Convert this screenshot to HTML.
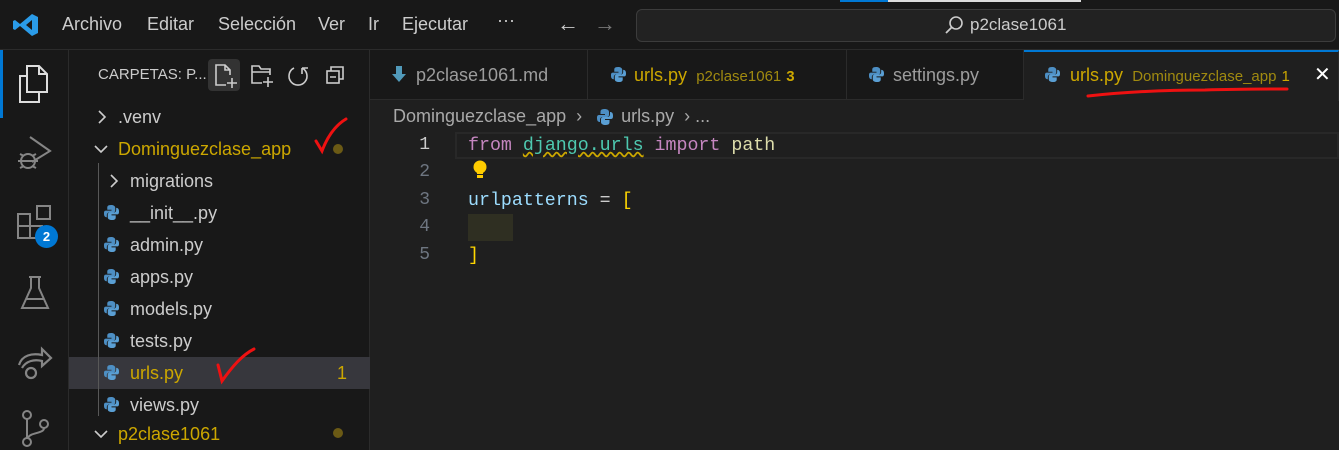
<!DOCTYPE html>
<html><head><meta charset="utf-8"><style>
*{margin:0;padding:0;box-sizing:border-box}
body{width:1339px;height:450px;background:#1f1f1f;font-family:"Liberation Sans",sans-serif;overflow:hidden;position:relative;color:#ccc}
.a{position:absolute}
.title{left:0;top:0;width:1339px;height:50px;background:#181818;border-bottom:1px solid #2b2b2b}
.menu{top:14px;font-size:18px;color:#ccc}
.act{left:0;top:50px;width:69px;height:400px;background:#181818;border-right:1px solid #2b2b2b}
.side{left:69px;top:50px;width:301px;height:400px;background:#181818;border-right:1px solid #2b2b2b}
.tabs{left:370px;top:50px;width:969px;height:50px;background:#181818;border-bottom:1px solid #2b2b2b}
.tab{top:50px;height:50px;border-right:1px solid #2b2b2b;font-size:18px;line-height:50px;color:#9d9d9d;padding-left:46px;white-space:nowrap}
.row{left:69px;width:301px;height:32px;font-size:18px;line-height:32px;color:#ccc;white-space:nowrap}
.code{font-family:"Liberation Mono",monospace;font-size:18.3px;white-space:pre}
.ln{left:400px;width:30px;text-align:right;font-family:"Liberation Mono",monospace;font-size:18px;color:#6e7681}
.chev{position:absolute;fill:none;stroke:#ccc;stroke-width:1.6}
</style></head><body>
<svg width="0" height="0" style="position:absolute"><defs><symbol id="py" viewBox="0 0 16 16"><path d="M7.5 0C3.5 0 3.5 2 3.5 3V5H8V6H2C0 6 0 8 0 9C0 12 1 13 3 13V11C3 9 4 8 6 8H10C11 8 12 7 12 6V3C12 1 10 0 7.5 0Z" fill="#4d8fc4"/><path d="M8.5 16C12.5 16 12.5 14 12.5 13V11H8V10H14C16 10 16 8 16 7C16 4 15 3 13 3V5C13 7 12 8 10 8H6C5 8 4 9 4 10V13C4 15 6 16 8.5 16Z" fill="#5a9fd4"/></symbol></defs></svg>
<div class="a title"></div>
<div class="a" style="left:840px;top:0;width:48px;height:2px;background:#0078d4"></div>
<div class="a" style="left:888px;top:0;width:193px;height:2px;background:#ddd"></div>
<svg class="a" style="left:13px;top:13px" width="26" height="24" viewBox="0 0 26 24"><path d="M19 1L25 4V20L19 23L7 13L2 17L0 16V8L2 7L7 11L19 1ZM19 7L13 12L19 17Z" fill="#2a9be8"/></svg>
<div class="a menu" style="left:62px">Archivo</div>
<div class="a menu" style="left:147px">Editar</div>
<div class="a menu" style="left:218px">Selección</div>
<div class="a menu" style="left:318px">Ver</div>
<div class="a menu" style="left:368px">Ir</div>
<div class="a menu" style="left:402px">Ejecutar</div>
<div class="a menu" style="left:497px;top:10px">···</div>
<div class="a menu" style="left:557px;top:11px;font-size:22px">←</div>
<div class="a menu" style="left:594px;top:11px;font-size:22px;color:#777">→</div>
<div class="a" style="left:636px;top:9px;width:700px;height:33px;border:1px solid #3c3c3c;border-radius:6px;background:#222"></div>
<svg class="a" style="left:944px;top:15px" width="20" height="20"><circle cx="12" cy="8" r="6" stroke="#ccc" stroke-width="1.6" fill="none"/><path d="M8 12L2 18" stroke="#ccc" stroke-width="1.8"/></svg>
<div class="a menu" style="left:970px;top:15px;font-size:17px">p2clase1061</div>

<div class="a act"></div>
<div class="a" style="left:0;top:50px;width:3px;height:68px;background:#0078d4"></div>
<svg class="a" style="left:17px;top:64px" width="34" height="40" fill="none" stroke="#ddd" stroke-width="2"><path d="M10 2H22L30 10V28H10Z"/><path d="M22 2V10H30"/><path d="M10 12H3V38H22V28"/></svg>
<svg class="a" style="left:16px;top:134px" width="38" height="40" fill="none" stroke="#858585" stroke-width="2"><path d="M14 3L34 17L16 28"/><circle cx="12" cy="27" r="7"/><path d="M2 27H22M4 20L8 22M4 34L8 32M20 20L16 22M20 34L16 32"/></svg>
<svg class="a" style="left:17px;top:204px" width="36" height="40" fill="none" stroke="#858585" stroke-width="2"><rect x="1" y="10" width="12" height="12"/><rect x="1" y="22" width="12" height="12"/><rect x="13" y="22" width="12" height="12"/><rect x="20" y="2" width="13" height="13"/></svg>
<div class="a" style="left:35px;top:225px;width:23px;height:23px;border-radius:50%;background:#0078d4;color:#fff;font-size:13px;font-weight:bold;text-align:center;line-height:23px">2</div>
<svg class="a" style="left:20px;top:275px" width="30" height="36" fill="none" stroke="#858585" stroke-width="2"><path d="M9 2H21M11 2V13L2 33H28L19 13V2M6 24H24"/></svg>
<svg class="a" style="left:16px;top:343px" width="38" height="40" fill="none" stroke="#858585" stroke-width="2.2"><path d="M3 22C6 12 16 10 26 12V6L35 15L26 23V18C18 16 10 18 6 25"/><circle cx="15" cy="30" r="5"/></svg>
<svg class="a" style="left:20px;top:410px" width="30" height="40" fill="none" stroke="#858585" stroke-width="2"><circle cx="7" cy="5" r="4"/><circle cx="24" cy="14" r="4"/><circle cx="7" cy="32" r="4"/><path d="M7 9V28M24 18C24 24 10 22 8 28"/></svg>

<div class="a side"></div>
<div class="a" style="left:98px;top:66px;font-size:15px;color:#ccc">CARPETAS: P...</div>
<div class="a" style="left:208px;top:59px;width:32px;height:32px;background:#333;border-radius:4px"></div>
<svg class="a" style="left:214px;top:63px" width="24" height="26" fill="none" stroke="#ccc" stroke-width="1.6"><path d="M12 22H2V2H11L16 7V12M11 2V7H16M18 15V25M13 20H23"/></svg>
<svg class="a" style="left:250px;top:63px" width="26" height="26" fill="none" stroke="#ccc" stroke-width="1.6"><path d="M12 20H2V3H9L11 6H20V12M2 9H20M18 14V24M13 19H23"/></svg>
<svg class="a" style="left:287px;top:64px" width="22" height="24" fill="none" stroke="#ccc" stroke-width="1.6"><path d="M7 4A9 9 0 1 0 15 4M15 4V10M15 4H21"/></svg>
<svg class="a" style="left:325px;top:64px" width="22" height="22" fill="none" stroke="#ccc" stroke-width="1.6"><rect x="2" y="7" width="12" height="12"/><path d="M6 7V3H18V15H14M5 13H11"/></svg>

<div class="a row" style="top:357px;background:#37373d"></div>
<svg class="chev" style="left:96px;top:110px" width="12" height="14"><path d="M3 1L9 7L3 13"/></svg>
<div class="a row" style="top:101px;padding-left:49px">.venv</div>
<svg class="chev" style="left:94px;top:144px" width="14" height="10"><path d="M1 2L7 8L13 2"/></svg>
<div class="a row" style="top:133px;padding-left:49px;color:#cca700">Dominguezclase_app</div>
<div class="a" style="left:333px;top:144px;width:10px;height:10px;border-radius:50%;background:#6b5a15"></div>
<div class="a" style="left:98px;top:163px;width:1px;height:253px;background:#585858"></div>
<svg class="chev" style="left:108px;top:174px" width="12" height="14"><path d="M3 1L9 7L3 13"/></svg>
<div class="a row" style="top:165px;padding-left:61px">migrations</div>
<div class="a row" style="top:197px;padding-left:61px">__init__.py</div>
<div class="a row" style="top:229px;padding-left:61px">admin.py</div>
<div class="a row" style="top:261px;padding-left:61px">apps.py</div>
<div class="a row" style="top:293px;padding-left:61px">models.py</div>
<div class="a row" style="top:325px;padding-left:61px">tests.py</div>
<div class="a row" style="top:357px;padding-left:61px;color:#cca700">urls.py<span style="position:absolute;left:268px">1</span></div>
<div class="a row" style="top:389px;padding-left:61px">views.py</div>
<svg class="chev" style="left:94px;top:429px" width="14" height="10"><path d="M1 2L7 8L13 2"/></svg>
<div class="a row" style="top:418px;padding-left:49px;color:#cca700">p2clase1061</div>
<div class="a" style="left:333px;top:428px;width:10px;height:10px;border-radius:50%;background:#6b5a15"></div>
<svg class="a" style="left:104px;top:205px" width="15" height="15"><use href="#py"/></svg>
<svg class="a" style="left:104px;top:237px" width="15" height="15"><use href="#py"/></svg>
<svg class="a" style="left:104px;top:269px" width="15" height="15"><use href="#py"/></svg>
<svg class="a" style="left:104px;top:301px" width="15" height="15"><use href="#py"/></svg>
<svg class="a" style="left:104px;top:333px" width="15" height="15"><use href="#py"/></svg>
<svg class="a" style="left:104px;top:365px" width="15" height="15"><use href="#py"/></svg>
<svg class="a" style="left:104px;top:397px" width="15" height="15"><use href="#py"/></svg>
<svg class="a" style="left:310px;top:115px" width="40" height="40" fill="none" stroke="#e11" stroke-width="3" stroke-linecap="round"><path d="M6 26L12 36C18 20 26 10 36 4"/></svg>
<svg class="a" style="left:212px;top:345px" width="46" height="40" fill="none" stroke="#e11" stroke-width="3" stroke-linecap="round"><path d="M6 20L10 36C20 22 30 10 42 4"/></svg>

<div class="a tabs"></div>
<div class="a tab" style="left:370px;width:218px">p2clase1061.md</div>
<svg class="a" style="left:392px;top:66px" width="14" height="16"><path d="M4 0H10V8H14L7 16L0 8H4Z" fill="#519aba"/></svg>
<div class="a tab" style="left:588px;width:259px;color:#cca700">urls.py <span style="font-size:15px;color:#a08a10">&nbsp;p2clase1061</span> <b style="font-size:15px">3</b></div>
<svg class="a" style="left:611px;top:67px" width="15" height="15"><use href="#py"/></svg>
<div class="a tab" style="left:847px;width:177px">settings.py</div>
<svg class="a" style="left:869px;top:67px" width="15" height="15"><use href="#py"/></svg>
<div class="a tab" style="left:1024px;width:315px;background:#1f1f1f;border-top:2px solid #0078d4;line-height:46px;color:#cca700;height:51px">urls.py <span style="font-size:15px;color:#a08a10">&nbsp;Dominguezclase_app</span> <span style="font-size:15px">1</span> <span style="color:#fff;position:absolute;left:290px;font-size:20px">✕</span></div>
<svg class="a" style="left:1045px;top:67px" width="15" height="15"><use href="#py"/></svg>
<svg class="a" style="left:1085px;top:86px" width="206" height="14" fill="none" stroke="#e11" stroke-width="3" stroke-linecap="round"><path d="M3 10C40 6 80 4 120 4C150 3 180 3 202 3"/></svg>

<div class="a" style="left:393px;top:106px;font-size:18px;color:#a9a9a9;white-space:nowrap">Dominguezclase_app &nbsp;›&nbsp;&nbsp; <span style="display:inline-block;width:24px"></span>urls.py &nbsp;›&nbsp;...</div>
<svg class="a" style="left:597px;top:109px" width="16" height="16"><use href="#py"/></svg>
<div class="a" style="left:455px;top:132px;width:884px;height:27px;border:2px solid #282828"></div>
<div class="a ln" style="top:135px;color:#ccc">1</div>
<div class="a ln" style="top:162px">2</div>
<div class="a ln" style="top:190px">3</div>
<div class="a ln" style="top:217px">4</div>
<div class="a ln" style="top:245px">5</div>
<div class="a code" style="left:468px;top:136px"><span style="color:#c586c0">from</span> <span style="color:#4ec9b0;text-decoration:underline wavy #cca700">django.urls</span> <span style="color:#c586c0">import</span> <span style="color:#dcdcaa">path</span></div>
<svg class="a" style="left:472px;top:160px" width="16" height="20"><circle cx="8" cy="7" r="6.5" fill="#ffcc00"/><rect x="5" y="12" width="6" height="6" fill="#ffcc00"/><rect x="5" y="14" width="6" height="1" fill="#1f1f1f"/></svg>
<div class="a code" style="left:468px;top:191px"><span style="color:#9cdcfe">urlpatterns</span> <span style="color:#ccc">=</span> <span style="color:#ffd700">[</span></div>
<div class="a" style="left:468px;top:214px;width:45px;height:27px;background:#2f2f22"></div>
<div class="a code" style="left:468px;top:246px;color:#ffd700">]</div>
</body></html>
